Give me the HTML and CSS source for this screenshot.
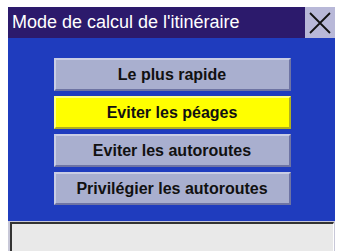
FILE: index.html
```html
<!DOCTYPE html>
<html>
<head>
<meta charset="utf-8">
<link rel="stylesheet" href="styles.css">
</head>
<body>
<div class="screen">
  <div class="titlebar">
    <div class="title">Mode de calcul de l'itinéraire</div>
    <div class="close">
      <svg width="24" height="24" viewBox="0 0 24 24"><path d="M2 2 L22 22 M22 2 L2 22" stroke="#111" stroke-width="1.8" fill="none"/></svg>
    </div>
  </div>
  <div class="main">
    <div class="btn">Le plus rapide</div>
    <div class="btn selected">Eviter les péages</div>
    <div class="btn">Eviter les autoroutes</div>
    <div class="btn">Privilégier les autoroutes</div>
  </div>
  <div class="status"><div class="status-box"></div></div>
</div>
</body>
</html>
```
FILE: styles.css
```css
html, body { margin: 0; padding: 0; background: #ffffff; }
body { font-family: "Liberation Sans", Arial, sans-serif; }
.screen { margin: 7px 4px 0 8px; width: 327px; }
.titlebar { display: flex; height: 31px; background: #2c1a6c; align-items: center; }
.title { flex: 1; color: #ffffff; font-size: 18px; padding-left: 4px; line-height: 31px; }
.close { width: 30px; height: 31px; background: #b8b8d8; display: flex; align-items: center; justify-content: center; }
.main { background: #1f3cbe; height: 163px; padding-top: 20px; display: flex; flex-direction: column; align-items: center; gap: 5px; padding-left: 1px; }
.btn { width: 233px; height: 29px; background: #a9afcf; border: 2px solid; border-color: #c9cde4 #6e74a4 #6e74a4 #c9cde4; color: #111; font-weight: bold; font-size: 16px; display: flex; align-items: center; justify-content: center; }
.btn.selected { background: #ffff00; border-color: #ffff80 #b0b020 #b0b020 #ffff80; }
.status { background: #c8c8d8; height: 30px; padding: 1px 1px 0 2px; }
.status-box { height: 100%; background: #e9e9e9; border-top: 2px solid #333; border-left: 2px solid #333; border-right: 1px solid #fff; box-sizing: border-box; }
```
